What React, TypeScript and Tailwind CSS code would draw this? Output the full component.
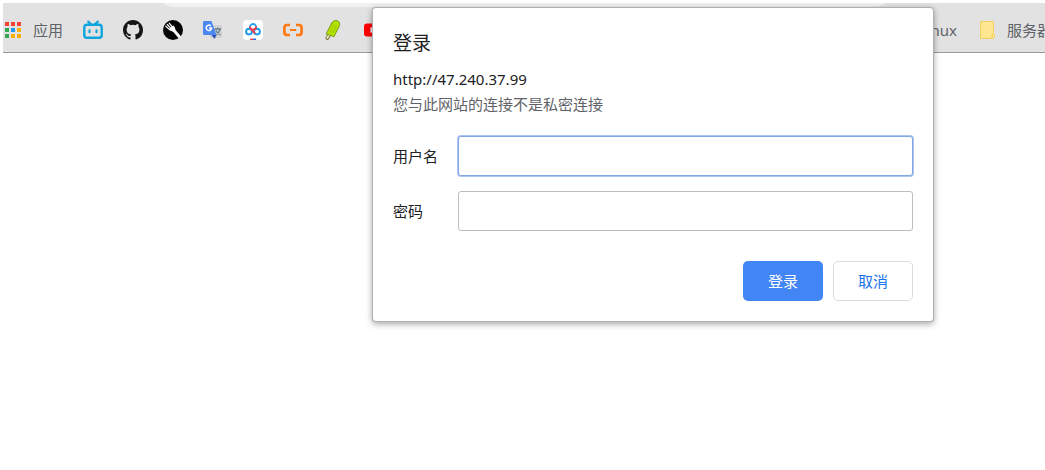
import type { ReactNode } from 'react';

function AppsIcon() {
  const colors = ['#f44336', '#f44336', '#f44336', '#34a853', '#2196f3', '#fbb003', '#34a853', '#fbb003', '#fbb003'];
  return (
    <svg viewBox="0 0 18 18" className="size-[18px]" aria-hidden="true">
      {colors.map((c, i) => (
        <rect key={i} x={1 + (i % 3) * 6} y={1 + Math.floor(i / 3) * 6} width="4" height="4" fill={c} />
      ))}
    </svg>
  );
}

function TvIcon() {
  return (
    <svg viewBox="0 0 20 20" className="size-5" fill="none" stroke="#0ea5de" strokeLinecap="round" aria-hidden="true">
      <rect x="1.3" y="4.8" width="17.4" height="13" rx="2.6" strokeWidth="2.4" />
      <path d="M5.2 1.6 8 4.4M14.8 1.6 12 4.4" strokeWidth="2.2" />
      <path d="M6.5 10.4v1.8M13.5 10.4v1.8" strokeWidth="2.2" />
    </svg>
  );
}

function GithubIcon() {
  return (
    <svg viewBox="0 0 16 16" className="size-5" fill="#161616" aria-hidden="true">
      <path d="M8 0C3.58 0 0 3.58 0 8c0 3.54 2.29 6.53 5.47 7.59.4.07.55-.17.55-.38 0-.19-.01-.82-.01-1.49-2.01.37-2.53-.49-2.69-.94-.09-.23-.48-.94-.82-1.13-.28-.15-.68-.52-.01-.53.63-.01 1.08.58 1.23.82.72 1.21 1.87.87 2.33.66.07-.52.28-.87.51-1.07-1.78-.2-3.64-.89-3.64-3.95 0-.87.31-1.59.82-2.15-.08-.2-.36-1.02.08-2.12 0 0 .67-.21 2.2.82a7.6 7.6 0 0 1 4 0c1.53-1.04 2.2-.82 2.2-.82.44 1.1.16 1.92.08 2.12.51.56.82 1.27.82 2.15 0 3.07-1.87 3.75-3.65 3.95.29.25.54.73.54 1.48 0 1.07-.01 1.93-.01 2.2 0 .21.15.46.55.38A8.01 8.01 0 0 0 16 8c0-4.42-3.58-8-8-8z" />
    </svg>
  );
}

function ForkIcon() {
  return (
    <svg viewBox="0 0 20 20" className="size-5" aria-hidden="true">
      <circle cx="10" cy="10" r="10" fill="#050505" />
      <g fill="none" stroke="#fff" strokeLinecap="round">
        <path d="M2.8 6.2 6.8 9.8M4.3 4.5 8 8.4M6.2 3.2 9.4 7" strokeWidth="1.2" />
        <path d="m11 10.6 5.2 5.8" strokeWidth="3" />
      </g>
      <path d="M5.8 9.3 10.2 5.6c1.7 1.4 2.3 3 2.1 5l-1.2 1.1c-2.1.1-4-.8-5.300-2.400z" fill="#fff" />
    </svg>
  );
}

function TranslateIcon() {
  return (
    <svg viewBox="0 0 20 20" className="size-5" aria-hidden="true">
      <rect x="7" y="5" width="12" height="13" rx="1" fill="#d3d3d3" />
      <path d="M11.5 9h6.5M14.7 7.5V9M17 9c-.4 2.5-2 4.6-4.3 5.8M12.7 10.3c.8 2 2.5 3.7 4.8 4.5" fill="none" stroke="#607d8b" strokeWidth="1.3" />
      <path d="M8.5 15h5l-2 4z" fill="#3350b8" />
      <path d="M1.2 1h7.3l4.9 14H1.2A1.2 1.2 0 0 1 0 13.8V2.2A1.2 1.2 0 0 1 1.2 1z" fill="#4a87ee" />
      <path d="M7.8 5.9A2.7 2.7 0 1 0 8.6 8H6.1" fill="none" stroke="#fff" strokeWidth="1.5" />
    </svg>
  );
}

function NetdiskIcon() {
  return (
    <svg viewBox="0 0 20 20" className="size-5" aria-hidden="true">
      <rect width="20" height="20" rx="4" fill="#fff" />
      <g fill="none" strokeWidth="1.900">
        <circle cx="6" cy="11.6" r="2.9" stroke="#159bf2" />
        <circle cx="14" cy="11.6" r="2.9" stroke="#159bf2" />
        <path d="M7 7.900a3.100 3.100 0 1 1 6 0" stroke="#22a6f2" />
        <path d="M6.900 6.600a3.100 3.100 0 0 0 6.200 0" stroke="#f0414c" />
        <path d="m8.600 9.700 3.600 4" stroke="#f0414c" />
      </g>
      <path d="M7 19.300h3" stroke="#f0414c" strokeWidth="1.400" />
      <path d="M10 19.300h3" stroke="#2864e8" strokeWidth="1.400" />
    </svg>
  );
}

function CloudIcon() {
  return (
    <svg viewBox="0 0 20 20" className="size-5" fill="none" stroke="#ff7a13" aria-hidden="true">
      <path d="M7 5H4.200Q1.400 5 1.400 7.800v4.400Q1.400 15 4.200 15H7M13 5h2.800q2.800 0 2.800 2.800v4.400q0 2.800-2.800 2.800H13" strokeWidth="2.700" />
      <path d="M6.800 10h6.400" strokeWidth="2" />
    </svg>
  );
}

function PopsicleIcon() {
  return (
    <svg viewBox="0 0 20 20" className="size-5" strokeLinecap="round" aria-hidden="true">
      <path d="m6.200 15-1.900 3" stroke="#62651f" strokeWidth="3.400" />
      <path d="m6.200 15-1.900 2.800" stroke="#f5e9c8" strokeWidth="2" />
      <path d="M8.500 3.300C9.700 1 12 .1 14.300.8c2.200.8 2.900 2.700 2.100 4.900-.8 2.600-3.600 7-5.400 11L3.200 14c1.700-3.400 3.500-7.600 5.300-10.700z" fill="#b2e000" stroke="#6b8a12" strokeWidth=".8" />
      <path d="m10.500 5-3 6.800M13.300 5.800l-3 6.700" stroke="#9ccb04" strokeWidth="1" />
    </svg>
  );
}

function VideoIcon() {
  return (
    <svg viewBox="0 0 20 20" className="size-5" aria-hidden="true">
      <rect x="1" y="3.500" width="19" height="13" rx="3" fill="#f00" />
      <path d="m7.500 7 6 3-6 3z" fill="#fff" />
    </svg>
  );
}

function FolderIcon() {
  return (
    <svg viewBox="0 0 16 20" className="h-5 w-4" aria-hidden="true">
      <path d="M1.500 1.500h13v12l1 1v3l-1 1h-13z" fill="#ffe791" stroke="#f3cf60" />
      <path d="M13 18.500v-3.500l1.500-1.500" fill="none" stroke="#eec84f" />
    </svg>
  );
}

const bookmarks: { name: string; icon: ReactNode }[] = [
  { name: 'Bilibili', icon: <TvIcon /> },
  { name: 'GitHub', icon: <GithubIcon /> },
  { name: 'Fork', icon: <ForkIcon /> },
  { name: 'Translate', icon: <TranslateIcon /> },
  { name: 'Netdisk', icon: <NetdiskIcon /> },
  { name: 'Cloud', icon: <CloudIcon /> },
  { name: 'Popsicle', icon: <PopsicleIcon /> },
  { name: 'YouTube', icon: <VideoIcon /> },
];

function BookmarkBar() {
  return (
    <header className="overflow-hidden border-b border-[#999] bg-[#e2e2e2] text-[#5f6368]">
      <div className="mr-40 ml-[161px] h-1 rounded-b-[12px_4px] bg-[#f1f1f1]" />
      <nav aria-label="书签" className="flex h-[45px] items-center gap-5 pt-px">
        <a href="#apps" className="flex shrink-0 items-center gap-[11px] pl-px">
          <AppsIcon />
          应用
        </a>
        {bookmarks.map((b) => (
          <a key={b.name} href={'#' + b.name} aria-label={b.name} className="shrink-0">
            {b.icon}
          </a>
        ))}
        <div className="-mr-[7px] ml-auto flex shrink-0 items-center gap-[22px]">
          <a href="#linux">Linux</a>
          <a href="#servers" className="flex items-center gap-3">
            <FolderIcon />
            服务器
          </a>
        </div>
      </nav>
    </header>
  );
}

function LoginDialog() {
  return (
    <div
      role="dialog"
      aria-labelledby="login-title"
      className="absolute top-2 right-28 w-[560px] rounded-[3px] bg-white p-5 text-[#212124] shadow-[0_0_0_1px_#b0b0b0,0_2px_6px_1px_rgba(0,0,0,0.35)]"
    >
      <h1 id="login-title" className="text-[19px] leading-[30px]">登录</h1>
      <p className="mt-[9px] leading-[25px]">http://47.240.37.99</p>
      <p className="leading-[25px] text-[#5f6368]">您与此网站的连接不是私密连接</p>
      <form className="mt-[19px]" onSubmit={(e) => e.preventDefault()}>
        <div className="grid grid-cols-[65px_1fr] items-center gap-y-[15px]">
          <label htmlFor="username">用户名</label>
          <input
            id="username"
            type="text"
            className="h-10 w-full rounded-[3px] border border-[#86a8e0] bg-white px-2 shadow-[0_0_0_1px_#a9c5f8] outline-none"
          />
          <label htmlFor="password">密码</label>
          <input
            id="password"
            type="password"
            className="h-10 w-full rounded-[3px] border border-[#bdbdbd] bg-white px-2 outline-none"
          />
        </div>
        <div className="mt-[30px] flex justify-end gap-[10px]">
          <button type="submit" className="h-10 w-20 rounded-[5px] bg-[#4285f4] text-white">登录</button>
          <button type="button" className="h-10 w-20 rounded-[5px] border border-[#dadce0] bg-white text-[#1a73e8]">取消</button>
        </div>
      </form>
    </div>
  );
}

export default function App() {
  return (
    <main className="relative min-h-screen bg-white pt-[3px] pl-[3px] font-['Noto_Sans','Noto_Sans_CJK_SC',sans-serif] text-[15px]">
      <BookmarkBar />
      <LoginDialog />
    </main>
  );
}
